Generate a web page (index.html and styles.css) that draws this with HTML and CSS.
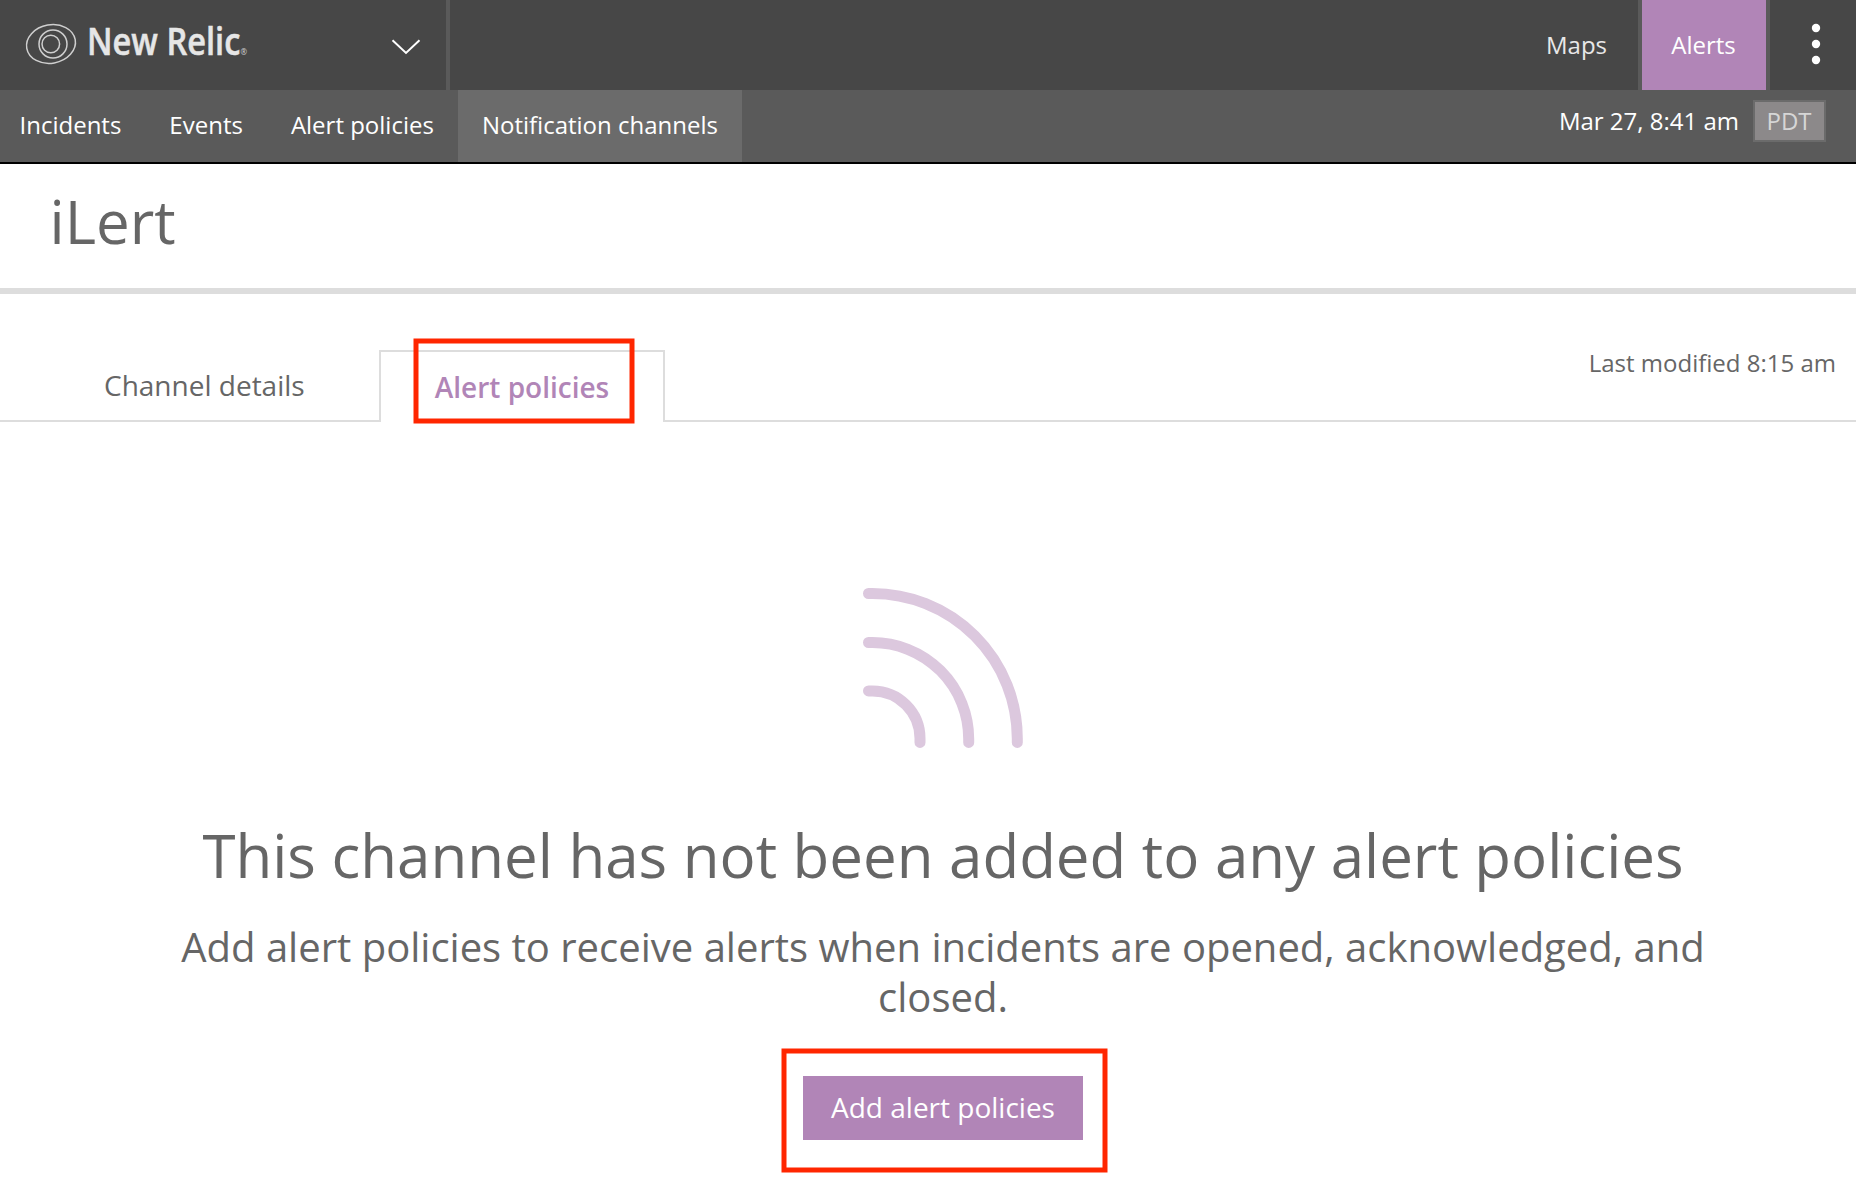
FILE: index.html
```html
<!DOCTYPE html>
<html lang="en">
<head>
<meta charset="utf-8">
<title>iLert - New Relic Alerts</title>
<link rel="stylesheet" href="styles.css">
</head>
<body>
<header class="topbar">
  <div class="brand">
    <svg class="logo" width="240" height="90" viewBox="0 0 240 90" role="img" aria-label="New Relic">
      <g fill="none" stroke="#cfcfcf" stroke-width="1.5">
        <ellipse cx="51" cy="44" rx="24.6" ry="19.2" transform="rotate(-10 51 44)"/>
        <circle cx="53" cy="44" r="14"/>
        <circle cx="50.800" cy="44" r="8.800"/>
      </g>
      <text class="logo-name" x="87" y="55.3" textLength="160" lengthAdjust="spacingAndGlyphs">New Relic<tspan class="logo-mark">®</tspan></text>
    </svg>
    <svg class="chevron" width="30" height="16" viewBox="0 0 30 16"><path d="M1.5 1.3 15 14 28.500 1.300" fill="none" stroke="#fff" stroke-width="2"/></svg>
  </div>
  <nav class="products">
    <a class="product">Maps</a>
    <a class="product product-active">Alerts</a>
    <a class="more"><svg width="10" height="42" viewBox="0 0 10 42" fill="#fff"><circle cx="5" cy="5" r="4.200"/><circle cx="5" cy="21" r="4.200"/><circle cx="5" cy="37" r="4.200"/></svg></a>
  </nav>
</header>
<nav class="subnav">
  <a class="subnav-item">Incidents</a>
  <a class="subnav-item">Events</a>
  <a class="subnav-item">Alert policies</a>
  <a class="subnav-item subnav-active">Notification channels</a>
  <div class="clock"><span class="time">Mar 27, 8:41 am</span><span class="zone">PDT</span></div>
</nav>
<h1 class="title">iLert</h1>
<div class="tabs">
  <a class="tab tab-details">Channel details</a>
  <a class="tab tab-active"><span class="tab-label">Alert policies</span></a>
  <div class="modified"><span class="modified-text">Last modified 8:15 am</span></div>
</div>
<main class="empty">
  <svg class="signal" width="164" height="160" viewBox="0 0 164 160" fill="none" stroke="#dcc8de" stroke-width="11" stroke-linecap="round">
    <path d="M7.500 5.500H11.300A145 145 0 0 1 156.300 150.500V154.400"/>
    <path d="M7.500 54.500H11.300A96.400 96.400 0 0 1 107.700 150.900V154.400"/>
    <path d="M7.500 102.900H11.500A47.500 47.500 0 0 1 59 150.400V154.400"/>
  </svg>
  <h2 class="empty-title">This channel has not been added to any alert policies</h2>
  <p class="empty-text">Add alert policies to receive alerts when incidents are opened, acknowledged, and closed.</p>
  <button class="button">Add alert policies</button>
</main>
<svg class="highlights" width="1856" height="1190" viewBox="0 0 1856 1190" fill="none" stroke="#ff2600" stroke-width="5">
  <rect x="416" y="341" width="216" height="80"/>
  <rect x="784" y="1051" width="321" height="119"/>
</svg>
</body>
</html>
```
FILE: styles.css
```css
* { box-sizing: border-box; }
body {
  position: relative;
  margin: 0;
  height: 1190px;
  overflow: hidden;
  background: #fff;
  color: #666;
  font-family: "Open Sans", "Noto Sans", sans-serif;
  font-size: 24px;
}
.topbar {
  display: flex;
  justify-content: space-between;
  height: 90px;
  background: #474747;
}
.brand {
  display: flex;
  width: 450px;
  border-right: 4px solid #5a5a5a;
}
.logo { overflow: visible; }
.logo-name { fill: #e6e6e6; font-size: 37px; font-weight: 600; stroke: #e6e6e6; stroke-width: 0.5px; }
.logo-mark { fill: #cfcfcf; font-size: 9px; font-weight: 400; stroke: none; }
.chevron { margin: 39px 0 0 151px; }
.products { display: flex; line-height: 90px; }
.product { padding: 0 31px 0 0; color: #e8e8e8; }
.product-active {
  width: 132px;
  padding: 0 1px 0 0;
  border: solid #5a5a5a;
  border-width: 0 4px;
  background: #b185b7;
  color: #fff;
  text-align: center;
}
.more { display: flex; width: 86px; padding: 23px 0 0 41px; }
.subnav {
  display: flex;
  height: 74px;
  border-bottom: 2px solid #000;
  background: #5a5a5a;
  color: #fff;
  line-height: 70px;
}
.subnav-item { padding: 0 24px; white-space: nowrap; }
.subnav-item:first-child { padding-left: 19.5px; }
.subnav-active { width: 284px; background: #6b6b6b; }
.clock {
  display: flex;
  gap: 14px;
  height: 42px;
  margin: 10px 30px 0 auto;
  line-height: 41px;
}
.zone {
  width: 73px;
  padding-right: 1px;
  border: 2px solid #6b6b6b;
  background: #8c898a;
  color: #d6d6d6;
  line-height: 37px;
  text-align: center;
}
.title {
  height: 130px;
  margin: 0;
  padding-left: 49.5px;
  border-bottom: 6px solid #ddd;
  font-size: 60px;
  font-weight: 400;
  line-height: 115px;
}
.tabs { display: flex; height: 128px; padding-top: 56px; }
.tab { border-bottom: 2px solid #ddd; font-size: 28px; }
.tab-details { width: 379px; padding-left: 104px; line-height: 70px; }
.tab-active {
  width: 286px;
  border: 2px solid #ddd;
  border-bottom: 0;
  color: #b185b7;
  font-weight: 600;
  line-height: 70px;
  text-align: center;
}
.modified {
  flex: 1;
  border-bottom: 2px solid #ddd;
  padding-right: 20px;
  line-height: 25px;
  text-align: right;
}
.empty {
  display: flex;
  flex-direction: column;
  align-items: center;
  padding: 166px 0 0 30px;
}
.signal { overflow: visible; }
.empty-title {
  margin: 67px 0 0;
  font-size: 60px;
  font-weight: 400;
  line-height: 80px;
  white-space: nowrap;
}
.empty-text {
  width: 1560px;
  margin: 27px 0 0;
  font-size: 40px;
  line-height: 50px;
  text-align: center;
}
.button {
  width: 280px;
  height: 64px;
  margin-top: 54px;
  padding: 0 0 2px;
  border: 0;
  background: #b185b7;
  color: #fff;
  font: 400 28px/60px "Open Sans", "Noto Sans", sans-serif;
}
.highlights { position: absolute; top: 0; left: 0; pointer-events: none; }
```
